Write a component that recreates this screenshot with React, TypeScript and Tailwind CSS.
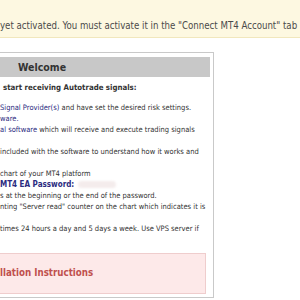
export default function App() {
  const font = { fontFamily: "'DejaVu Sans Condensed', 'DejaVu Sans', Verdana, sans-serif" };

  const link = "text-[#2b2b80]";

  return (
    <div className="w-[300px] h-[300px] overflow-hidden bg-white text-[#333]" style={font}>
      {/* Activation notice */}
      <div className="h-[38px] bg-[#fdf8e1] border-b border-[#f1e7bd] pt-[19px] whitespace-nowrap text-[9.6px] leading-[13px] text-[#4a4a4a]">
        yet activated. You must activate it in the "Connect MT4 Account" tab
      </div>

      {/* Welcome panel */}
      <div className="mt-[14px] w-[214px] h-[246px] border-t border-r border-b border-[#c9c9c9] pt-[4px] pr-[3px]">
        <div className="h-[20px] bg-[#c8c8c8] pl-[18px] text-[10.5px] leading-[20px] font-bold text-[#333]">
          Welcome
        </div>

        <div className="pl-[3px] pt-[5px] h-[25px] text-[7.8px] leading-[11px] font-bold whitespace-nowrap">
          start receiving Autotrade signals:
        </div>

        <div className="text-[7.5px] leading-[11px] whitespace-nowrap">
          <div className="h-[11px]">
            <span className={link}>Signal Provider(s)</span> and have set the desired risk settings.
          </div>
          <div className="h-[11px]">
            <span className={link}>ware.</span>
          </div>
          <div className="h-[11px]">
            <span className={link}>al software</span> which will receive and execute trading signals
          </div>
          <div className="h-[11px]">&nbsp;</div>
          <div className="h-[11px]">included with the software to understand how it works and</div>
          <div className="h-[11px]">&nbsp;</div>
          <div className="h-[11px]">chart of your MT4 platform</div>
          <div className="h-[11px] flex items-center gap-[4px]">
            <span className={`${link} font-bold text-[8px]`}>MT4 EA Password:</span>
            <span className="w-[38px] h-[7px] rounded-sm bg-[#f4ecec] blur-[1px]" />
          </div>
          <div className="h-[11px]">s at the beginning or the end of the password.</div>
          <div className="h-[11px]">nting "Server read" counter on the chart which indicates it is</div>
          <div className="h-[11px]">&nbsp;</div>
          <div className="h-[11px]">times 24 hours a day and 5 days a week. Use VPS server if</div>
          <div className="h-[11px]">&nbsp;</div>
        </div>

        {/* Installation instructions */}
        <div className="mt-[8px] mr-[4px] h-[41px] bg-[#fde9e9] border-t border-r border-b border-[#efcdcd] flex items-center text-[9.7px] font-bold text-[#c0504d] whitespace-nowrap">
          llation Instructions
        </div>
      </div>
    </div>
  );
}
